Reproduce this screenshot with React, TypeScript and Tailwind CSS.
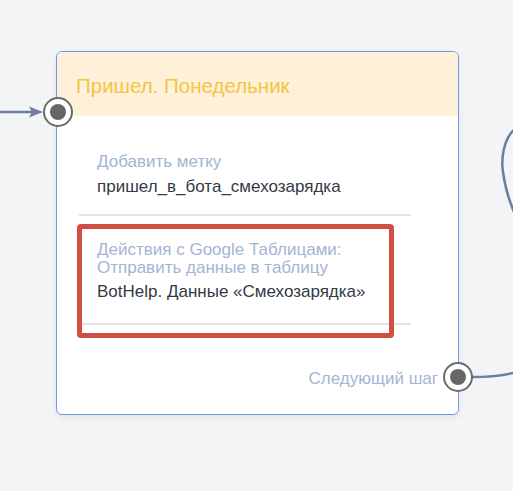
import React from "react";

const font = { fontFamily: '"Liberation Sans", Arial, sans-serif' };

const Port = ({ className }: { className: string }) => (
  <div
    className={`absolute w-[30px] h-[30px] rounded-full border-2 border-[#6b6b6b] bg-white flex items-center justify-center ${className}`}
  >
    <div className="w-[16px] h-[16px] rounded-full bg-[#666666]" />
  </div>
);

const Edges = () => (
  <svg className="absolute inset-0" width="513" height="491" fill="none">
    <path d="M0 112 L34 112" stroke="#6c7fa3" strokeWidth="2.5" />
    <path d="M43 112 L29 106.5 L32 112 L29 117.5 Z" fill="#6c7fa3" />
    <path d="M472 377 C490 377 500 376 513 373" stroke="#6c7fa3" strokeWidth="2.5" />
    <path d="M516 128 C503 138 501 160 503 172 C505 188 509 200 514 212" stroke="#6c7fa3" strokeWidth="2.5" />
  </svg>
);

const Section = ({ label, value, pt, pb, gap }: { label: string[]; value: string; pt: string; pb: string; gap: string }) => (
  <div>
    <div className={`pl-[18px] ${pt} ${pb}`}>
      {label.map((l) => (
        <div key={l} className="text-[17px] leading-[18px] text-[#a3b5d3]">{l}</div>
      ))}
      <div className={`${gap} text-[17px] leading-[20px] text-[#333a45]`}>{value}</div>
    </div>
    <div className="h-[2px] bg-[#e4e4e4]" />
  </div>
);

export default function App() {
  return (
    <div className="relative w-[513px] h-[491px] bg-[#f3f4f6] overflow-hidden" style={font}>
      <Edges />
      <div className="absolute left-[56px] top-[51px] w-[403px] h-[364px] rounded-[6px] border border-[#6d9ce6] bg-white shadow-[0_2px_6px_rgba(0,0,0,0.08)] flex flex-col">
        <div className="h-[64px] bg-[#fef0d9] rounded-t-[5px] flex items-center pl-[19px] pt-[4px]">
          <span className="text-[20.5px] text-[#f6c443]">Пришел. Понедельник</span>
        </div>
        <div className="pl-[22px] pr-[47px] pt-[12px]">
          <Section label={["Добавить метку"]} value="пришел_в_бота_смехозарядка" pt="pt-[25px]" pb="pb-[17px]" gap="mt-[6px]" />
          <div className="relative">
            <Section
              label={["Действия с Google Таблицами:", "Отправить данные в таблицу"]}
              value="BotHelp. Данные «Смехозарядка»"
              pt="pt-[25px]"
              pb="pb-[21px]"
              gap="mt-[5px]"
            />
            <div className="absolute -left-[2px] top-[8px] w-[317px] h-[114px] border-[5px] border-[#d14f42] rounded-[4px]" />
          </div>
        </div>
        <div className="mt-auto mb-[27px] pr-[20px] text-right text-[17px] leading-[17px] text-[#a3b5d3]">Следующий шаг</div>
      </div>
      <Port className="left-[43px] top-[97px]" />
      <Port className="left-[443px] top-[362px]" />
    </div>
  );
}
